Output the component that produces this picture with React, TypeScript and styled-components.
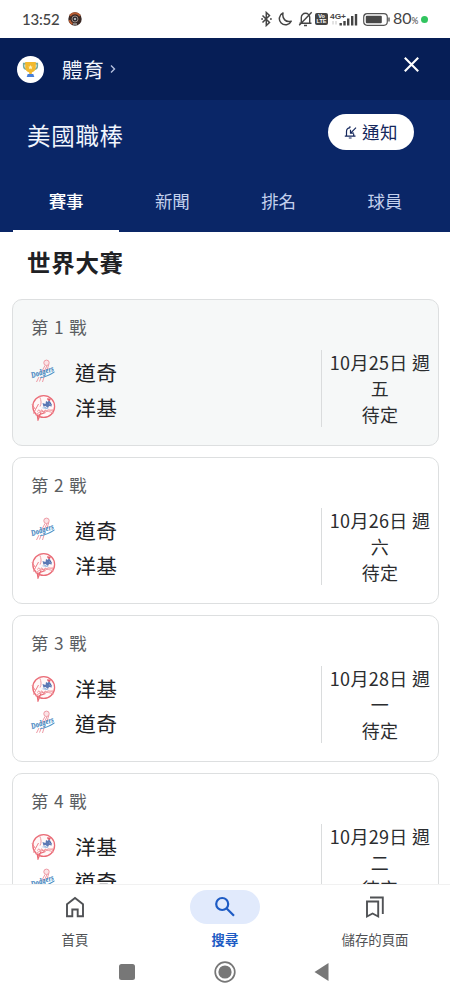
import React from 'react';
import styled, { createGlobalStyle } from 'styled-components';

const GlobalStyle = createGlobalStyle`
  *, *::before, *::after { box-sizing: border-box; }
  body { margin: 0; background: #fff; }
  svg { display: block; flex: none; }
  button { font: inherit; letter-spacing: inherit; border: 0; background: none; padding: 0; margin: 0; }
  h1, h2 { margin: 0; }
`;

const Screen = styled.div`
  width: 450px;
  height: 1000px;
  display: flex;
  flex-direction: column;
  overflow: hidden;
  background: #fff;
  color: #202124;
  font-family: 'Noto Sans CJK TC', 'Noto Sans', sans-serif;
`;

const StatusBar = styled.div`
  flex: none;
  height: 38px;
  padding: 0 22px 0 22px;
  display: flex;
  align-items: center;
  color: #454545;
`;

const Clock = styled.span`
  font: 500 15px/20px Lato, sans-serif;
  letter-spacing: -0.2px;
  width: 46px;
  white-space: nowrap;
`;

const StatusIcons = styled.div`
  margin-left: auto;
  display: flex;
  align-items: center;
`;

const Percent = styled.span`
  font: 400 16px/20px Lato, sans-serif;
  width: 28px;
  margin-left: 3px;
  white-space: nowrap;
  small { font-size: 8.5px; }
`;

const GreenDot = styled.i`
  width: 7px;
  height: 7px;
  border-radius: 50%;
  background: #31c45f;
`;

const TopBar = styled.header`
  flex: none;
  height: 62px;
  padding: 0 30px 0 17px;
  display: flex;
  align-items: center;
  background: #061e56;
  color: #f1f5fc;
`;

const TrophyBadge = styled.span`
  width: 27px;
  height: 27px;
  border-radius: 50%;
  background: #fff;
  display: flex;
  align-items: center;
  justify-content: center;
`;

const Category = styled.span`
  margin: 0 5px 0 18px;
  font-size: 20.5px;
  line-height: 28px;
  letter-spacing: 0.7px;
`;

const CloseButton = styled.button`
  margin: -9px 0 0 auto;
  color: #fff;
`;

const Hero = styled.section`
  flex: none;
  height: 132px;
  display: flex;
  flex-direction: column;
  justify-content: space-between;
  background: #0a2667;
  color: #fff;
`;

const HeroRow = styled.div`
  padding: 14px 36px 0 27px;
  display: flex;
  justify-content: space-between;
  align-items: flex-start;
`;

const League = styled.h1`
  margin-top: 5px;
  font-size: 23.5px;
  line-height: 32px;
  font-weight: 400;
  letter-spacing: 0.7px;
  color: #f1f5fd;
`;

const NotifyButton = styled.button`
  width: 86px;
  height: 36px;
  border-radius: 18px;
  background: #fff;
  color: #14275c;
  font-size: 17.5px;
  line-height: 34px;
  letter-spacing: 0.5px;
  display: flex;
  align-items: center;
  justify-content: center;
  gap: 5px;
`;

const Tabs = styled.nav`
  display: flex;
  padding: 0 12px 0 13px;
`;

const Tab = styled.button<{ $active?: boolean }>`
  flex: 1;
  height: 57px;
  padding-bottom: 6px;
  font-size: 17.5px;
  line-height: 26px;
  letter-spacing: 0;
  font-weight: ${(p) => (p.$active ? 500 : 400)};
  color: ${(p) => (p.$active ? '#fff' : '#c3d0ed')};
  box-shadow: ${(p) => (p.$active ? 'inset 0 -2px #fff' : 'none')};
`;

const Content = styled.main`
  flex: 1;
  min-height: 0;
  overflow: hidden;
  padding: 12px 11px 0 12px;
`;

const SectionTitle = styled.h2`
  padding-left: 15px;
  height: 54.5px;
  font-size: 23.5px;
  line-height: 36px;
  letter-spacing: 0.7px;
  font-weight: 700;
`;

const GameList = styled.div`
  display: flex;
  flex-direction: column;
  gap: 11px;
`;

const GameCard = styled.article<{ $selected?: boolean }>`
  height: 147px;
  padding: 14.5px 0 0 18px;
  border: 1px solid #dddfe0;
  border-radius: 10px;
  background: ${(p) => (p.$selected ? '#f6f8f8' : '#fff')};
`;

const GameLabel = styled.div`
  font-size: 17.3px;
  line-height: 26px;
  color: #5b5e62;
  word-spacing: 1.6px;
  letter-spacing: 0.1px;
`;

const GameBody = styled.div`
  display: flex;
  height: 77px;
  margin-top: 9.5px;
`;

const Teams = styled.div`
  flex: 1;
  padding-top: 5px;
`;

const TeamRow = styled.div`
  height: 35px;
  display: flex;
  align-items: center;
  gap: 19px;
  font-size: 20.8px;
  line-height: 30px;
  letter-spacing: 0.4px;
`;

const Schedule = styled.div`
  width: 117px;
  border-left: 1px solid #dadcdd;
  font-size: 18px;
  line-height: 26px;
  letter-spacing: 0.3px;
  text-align: center;
  color: #2b2d2f;
`;

const ScheduleLine = styled.div`
  white-space: nowrap;
  position: relative;
  top: -1px;
`;

const Bottom = styled.footer`
  flex: none;
  height: 116px;
  border-top: 1px solid #f1f1f1;
  background: #fff;
`;

const NavRow = styled.nav`
  display: flex;
  padding-top: 5px;
`;

const NavItem = styled.button<{ $active?: boolean }>`
  flex: 1;
  display: flex;
  flex-direction: column;
  align-items: center;
  gap: 5px;
  font-size: 13.4px;
  line-height: 20px;
  font-weight: ${(p) => (p.$active ? 700 : 400)};
  color: ${(p) => (p.$active ? '#1d5bc4' : '#505255')};
`;

const NavPill = styled.span<{ $active?: boolean }>`
  width: 70px;
  height: 34px;
  border-radius: 17px;
  background: ${(p) => (p.$active ? '#e1eafc' : 'transparent')};
  display: flex;
  align-items: center;
  justify-content: center;
`;

const SystemKeys = styled.div`
  display: flex;
  align-items: center;
  justify-content: center;
  height: 24px;
  margin-top: 11px;
  gap: 76px;
`;

const Camera = () => (
  <svg width="14" height="14" viewBox="0 0 14 14">
    <circle cx="7" cy="7" r="6.7" fill="#3a2925" />
    <path d="M2 4a6 6 0 0 1 10 0M1.5 8a6 6 0 0 0 3 4" fill="none" stroke="#b65b32" strokeWidth="2" />
    <circle cx="7" cy="7" r="3" fill="#302f36" stroke="#a6948b" strokeWidth=".9" />
    <circle cx="7" cy="7" r="1" fill="#ddd" />
    <path d="M5 12h4" stroke="#bbb" strokeWidth="1.2" />
  </svg>
);

const Bluetooth = () => (
  <svg width="11" height="16" viewBox="0 0 11 16" fill="none" stroke="currentColor" strokeWidth="1.5">
    <path d="M1.5 4.5l7 7-3.200 3V1.500l3.200 3-7 7" />
    <path d="M.2 8h1.800M9 8h1.800" />
  </svg>
);

const Moon = () => (
  <svg width="14" height="14" viewBox="0 0 14 14" fill="none" stroke="currentColor" strokeWidth="1.500" strokeLinejoin="round">
    <path d="M5 1A6.200 6.200 0 1 0 13.200 9.200C8 10.800 3.800 6.800 5 1z" />
  </svg>
);

const MutedBell = () => (
  <svg width="15" height="16" viewBox="0 0 15 16" fill="none" stroke="currentColor" strokeWidth="1.400">
    <path d="M1.500 12.300h12M3.300 12V6.500a4.200 4.200 0 0 1 8.400 0V12M6 14.500h3M1.200 14.300L13.700 1.300" />
  </svg>
);

const VolteBadge = styled.span`
  width: 13px;
  height: 12px;
  margin-left: 2px;
  border-radius: 2px;
  background: #444;
  color: #fff;
  font: 700 5.5px/5px 'Liberation Sans', sans-serif;
  text-align: center;
  padding-top: 1px;
  white-space: pre-line;
`;

const Cellular = () => (
  <svg width="29" height="15" viewBox="0 0 29 15" fill="#444">
    <text x="1" y="6.500" fontFamily="Liberation Sans, sans-serif" fontWeight="700" fontSize="7.800" textLength="16" lengthAdjust="spacingAndGlyphs">4G+</text>
    <path d="M4 9v3.500M7 9v3.500" stroke="#b8b8b8" strokeWidth=".8" />
    <rect x="10.500" y="11" width="2.400" height="2.500" />
    <rect x="14.300" y="9" width="2.400" height="4.500" />
    <rect x="18" y="6.500" width="2.400" height="7" />
    <rect x="22" y="4" width="2.400" height="9.500" />
    <rect x="25.800" y="2" width="2.400" height="11.500" />
  </svg>
);

const Battery = () => (
  <svg width="27" height="13" viewBox="0 0 27 13">
    <rect x=".7" y=".7" width="23.600" height="11.600" rx="3.500" fill="#fff" stroke="#555" strokeWidth="1.200" />
    <rect x="2.800" y="2.700" width="16" height="7.600" rx="1" fill="#484848" />
    <path d="M26 4.500v4" stroke="#555" strokeWidth="1.400" />
  </svg>
);

const Trophy = () => (
  <svg width="17" height="17" viewBox="0 0 17 17">
    <path d="M4.500 2.600H1.700V5c0 2.200 1.200 3.300 3.300 3.300M12.500 2.600h2.800V5c0 2.200-1.200 3.300-3.300 3.300" fill="none" stroke="#76a99b" strokeWidth="1.600" />
    <path d="M3.200 1h10.600v5.500c0 2.600-1.800 4.500-4 4.900v2.100H7.200v-2.100C5 11 3.200 9.100 3.200 6.500z" fill="#f2b92e" />
    <path d="M8.500 4l.7 1.500 1.500.2-1.100 1.100.3 1.500-1.400-.8-1.400.8.300-1.500-1.100-1.100 1.500-.2z" fill="#fff3c2" />
    <path d="M5.700 13h5.600l1 3H4.700z" fill="#4a7fd8" />
  </svg>
);

const NotifyBell = () => (
  <svg width="13" height="14" viewBox="0 0 13 14" fill="none" stroke="currentColor" strokeWidth="1.200">
    <path d="M.8 11.200h10.700M2.500 11V6.500c0-2.100 1.300-3.500 3.400-3.600M9.700 11V8.800" />
    <path d="M5.900 1.300v1.600M4.800 13h2.800M12 2.700L6.900 7.800M6.500 4.800v3.400h3.400" />
  </svg>
);

const DodgersLogo = () => (
  <svg width="25" height="27" viewBox="0 0 25 27" fill="none" overflow="visible">
    <g stroke="#ee9aa5" strokeWidth="1">
      <circle cx="15.500" cy="3.800" r="2.700" fill="#fbe3e6" />
      <path d="M14 6.500L10.500 13M16 6.500L13 13M17.800 5.500L16 11M8 18l-2.500 5M10.500 17.500L8.500 22.500M13.500 16.500L11.500 23" />
    </g>
    <text x="1" y="19" transform="rotate(-18 1 19)" fill="#3f85c0" stroke="#3f85c0" strokeWidth=".2" fontFamily="Liberation Serif, serif" fontStyle="italic" fontWeight="700" fontSize="8.200" textLength="23.500" lengthAdjust="spacingAndGlyphs">Dodgers</text>
    <path d="M9 18.500c5-1.200 9.500-3 14.500-6.300v1.300c-5 3.300-9.500 5-14.500 5.800z" fill="#4b93c9" />
  </svg>
);

const YankeesLogo = () => (
  <svg width="25" height="27" viewBox="0 0 25 27" fill="none">
    <circle cx="12.700" cy="12.500" r="10.900" fill="#fff8f8" stroke="#ea6b76" strokeWidth="1.300" />
    <path d="M8.500 2.600c2 4 2 7 .5 10M4.500 21c4-4 11-5 18-2" stroke="#f19aa2" strokeWidth="1" />
    <path d="M11.500 9l3 1 .5-3 2 1 .5-2 2 2-1 2 2.500 2.500-3-.5-1 2-2.500-2-2 .8z" fill="#5b78b4" />
    <path d="M16 4.200l4 .6-1.200 2.400-2.300-1.200z" fill="#e2606e" />
    <path d="M19 8.500l1.500 3" stroke="#4b69a8" strokeWidth="1.300" />
    <path d="M10.500 14l4-1 3.500 2.300z" fill="#8fb5e0" />
    <path d="M1 10.500l3.500 5 3-5.500M4.500 15.500L2.500 19.500M6.500 17.500c.8-2 2.300-2 2.300 0M9.500 17.500c.8-2 1.800-2 2.300 0s1.500 0 2-1 1.500 1 2.500 0 2 0 6-.5" stroke="#ee7f89" strokeWidth="1" />
    <path d="M10 18.500L7 26l-.8-5M7.500 21l7-2.500" stroke="#ea6b76" strokeWidth="1.200" />
  </svg>
);

const HomeIcon = () => (
  <svg width="20" height="22" viewBox="0 0 20 22" fill="none" stroke="currentColor" strokeWidth="1.900">
    <path d="M2 8.200L10 2l8 6.200V20.200h-5.300V13.500H7.300v6.700H2z" />
  </svg>
);

const SearchIcon = () => (
  <svg width="22" height="22" viewBox="0 0 22 22" fill="none" stroke="currentColor" strokeWidth="2.200">
    <circle cx="8.200" cy="8" r="6" />
    <path d="M12.500 12.300l7.500 7.500" />
  </svg>
);

const SavedIcon = () => (
  <svg width="20" height="24" viewBox="0 0 20 24" fill="none" stroke="currentColor" strokeWidth="1.900">
    <path d="M2 6.500h11.200v15l-5.600-3-5.600 3z" />
    <path d="M5 2.500h12.800v16.500" />
  </svg>
);

type Team = 'dodgers' | 'yankees';

const teams = {
  dodgers: { name: '道奇', Logo: DodgersLogo },
  yankees: { name: '洋基', Logo: YankeesLogo },
};

const games: { no: number; order: Team[]; date: string; day: string }[] = [
  { no: 1, order: ['dodgers', 'yankees'], date: '10月25日 週', day: '五' },
  { no: 2, order: ['dodgers', 'yankees'], date: '10月26日 週', day: '六' },
  { no: 3, order: ['yankees', 'dodgers'], date: '10月28日 週', day: '一' },
  { no: 4, order: ['yankees', 'dodgers'], date: '10月29日 週', day: '二' },
];

const tabs = ['賽事', '新聞', '排名', '球員'];

const navItems = [
  { label: '首頁', Icon: HomeIcon },
  { label: '搜尋', Icon: SearchIcon, active: true },
  { label: '儲存的頁面', Icon: SavedIcon },
];

const IconGap = styled.span<{ $w: number }>`
  width: ${(p) => p.$w}px;
`;

export default function App() {
  return (
    <Screen>
      <GlobalStyle />
      <StatusBar>
        <Clock>13:52</Clock>
        <Camera />
        <StatusIcons>
          <Bluetooth />
          <IconGap $w={6} />
          <Moon />
          <IconGap $w={6} />
          <MutedBell />
          <VolteBadge>{'Vo\nLTE'}</VolteBadge>
          <IconGap $w={1} />
          <Cellular />
          <IconGap $w={5} />
          <Battery />
          <Percent>80<small>%</small></Percent>
          <GreenDot />
        </StatusIcons>
      </StatusBar>

      <TopBar>
        <TrophyBadge><Trophy /></TrophyBadge>
        <Category>體育</Category>
        <svg width="8" height="10" viewBox="0 0 8 10" fill="none" stroke="#b5c1de" strokeWidth="1.400">
          <path d="M2 1.500L5.500 5 2 8.500" />
        </svg>
        <CloseButton aria-label="關閉">
          <svg width="17" height="17" viewBox="0 0 17 17" fill="none" stroke="currentColor" strokeWidth="2.100">
            <path d="M1.800 1.800l13.400 13.400M15.200 1.800L1.800 15.200" />
          </svg>
        </CloseButton>
      </TopBar>

      <Hero>
        <HeroRow>
          <League>美國職棒</League>
          <NotifyButton><NotifyBell />通知</NotifyButton>
        </HeroRow>
        <Tabs>
          {tabs.map((t, i) => <Tab key={t} $active={i === 0}>{t}</Tab>)}
        </Tabs>
      </Hero>

      <Content>
        <SectionTitle>世界大賽</SectionTitle>
        <GameList>
          {games.map((g) => (
            <GameCard key={g.no} $selected={g.no === 1}>
              <GameLabel>第 {g.no} 戰</GameLabel>
              <GameBody>
                <Teams>
                  {g.order.map((id) => {
                    const { name, Logo } = teams[id];
                    return <TeamRow key={id}><Logo />{name}</TeamRow>;
                  })}
                </Teams>
                <Schedule>
                  <ScheduleLine>{g.date}</ScheduleLine>
                  <ScheduleLine>{g.day}</ScheduleLine>
                  <ScheduleLine>待定</ScheduleLine>
                </Schedule>
              </GameBody>
            </GameCard>
          ))}
        </GameList>
      </Content>

      <Bottom>
        <NavRow>
          {navItems.map(({ label, Icon, active }) => (
            <NavItem key={label} $active={active}>
              <NavPill $active={active}><Icon /></NavPill>
              {label}
            </NavItem>
          ))}
        </NavRow>
        <SystemKeys>
          <svg width="20" height="20" viewBox="0 0 20 20"><rect x="2" y="2" width="16" height="16" rx="2.500" fill="#777" /></svg>
          <svg width="24" height="24" viewBox="0 0 24 24">
            <circle cx="12" cy="12" r="9.800" fill="none" stroke="#777" strokeWidth="1.700" />
            <circle cx="12" cy="12" r="6.600" fill="#777" />
          </svg>
          <svg width="20" height="20" viewBox="0 0 20 20"><path d="M15.500 1v18L1.500 10z" fill="#777" /></svg>
        </SystemKeys>
      </Bottom>
    </Screen>
  );
}
